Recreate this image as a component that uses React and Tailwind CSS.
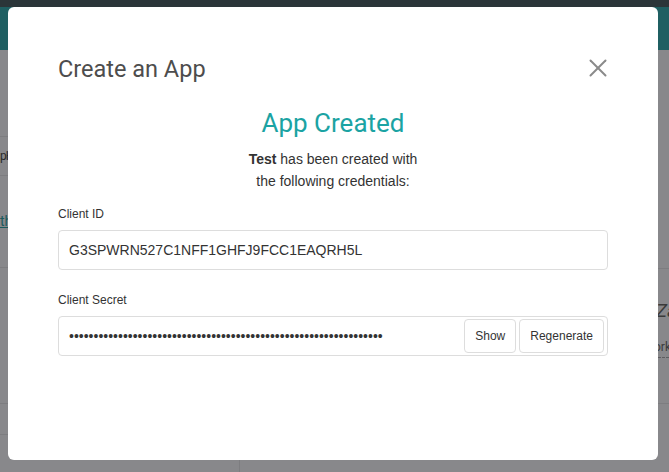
import { X } from 'lucide-react'

const dots = '•'.repeat(64)

export default function App() {
  return (
    <div className="relative w-[669px] h-[472px] overflow-hidden bg-[#88888b] font-['Roboto',sans-serif]">
      {/* page behind the dialog, dimmed */}
      <div className="h-[7px] bg-[#2b3539]" />
      <div className="h-[43px] bg-[#1f5f62]" />
      <div className="flex h-[422px]">
        <div className="w-[240px] flex flex-col border-r border-[#7d7d80]">
          <div className="h-[87px] border-b border-[#7d7d80]" />
          <div className="h-[39px] border-b border-[#7d7d80] flex items-center text-[12px] text-[#2a2a2a] tracking-[-1px]">pH</div>
          <div className="h-[92px] border-b border-[#7d7d80] flex items-center text-[14px] text-[#1a5a5c] underline">th</div>
          <div className="h-[136px] border-b border-[#7d7d80]" />
          <div className="h-[31px] border-b border-[#7d7d80]" />
        </div>
        <div className="flex-1 flex flex-col items-end">
          <div className="h-[219px] w-full border-b border-[#7d7d80]" />
          <div className="w-[11px] overflow-hidden whitespace-nowrap">
            <div className="mt-[32px] -ml-[2px] text-[19px] italic text-[#3a3a3a] leading-none">Za</div>
            <div className="mt-[21px] -ml-[4px] text-[12px] text-[#3a3a3a] leading-none">ork</div>
            <div className="mt-[4px] border-b border-dashed border-[#5d5d60] w-[11px]" />
          </div>
          <div className="mt-[45px] w-full border-b border-[#7d7d80]" />
        </div>
      </div>

      {/* dialog */}
      <div className="absolute left-[8px] top-[7px] w-[650px] h-[453px] rounded-[6px] bg-white px-[50px] pt-[47px]">
        <div className="flex items-center justify-between">
          <h2 className="text-[23.5px] leading-[28px] text-[#4d4d4d]">Create an App</h2>
          <X className="w-[30px] h-[30px] text-[#8a8a8a] -mr-[5px] -mt-[1px]" strokeWidth={1.6} />
        </div>

        <div className="mt-[24px] text-center">
          <h3 className="text-[26px] leading-[32px] text-[#1ba3a3]">App Created</h3>
          <p className="mt-[9px] text-[14px] leading-[22px] text-[#333] font-['Liberation_Sans',sans-serif]">
            <b>Test</b> has been created with
            <br />
            the following credentials:
          </p>
        </div>

        <div className="mt-[14px] font-['Liberation_Sans',sans-serif]">
          <label className="block text-[12px] leading-[16px] text-[#333]">Client ID</label>
          <div className="mt-[8px] h-[40px] border border-[#ddd] rounded-[4px] flex items-center px-[10px] text-[14px] text-[#333]">
            G3SPWRN527C1NFF1GHFJ9FCC1EAQRH5L
          </div>

          <label className="mt-[22px] block text-[12px] leading-[16px] text-[#333]">Client Secret</label>
          <div className="mt-[8px] h-[40px] border border-[#ddd] rounded-[4px] flex items-center pl-[10px] pr-[3px] text-[#333]">
            <span className="flex-1 text-[14px] overflow-hidden whitespace-nowrap">{dots}</span>
            <div className="flex gap-[3px]">
              <button className="h-[34px] px-[10px] border border-[#ddd] rounded-[4px] text-[12px] bg-white">Show</button>
              <button className="h-[34px] px-[10px] border border-[#ddd] rounded-[4px] text-[12px] bg-white">Regenerate</button>
            </div>
          </div>
        </div>
      </div>
    </div>
  )
}
